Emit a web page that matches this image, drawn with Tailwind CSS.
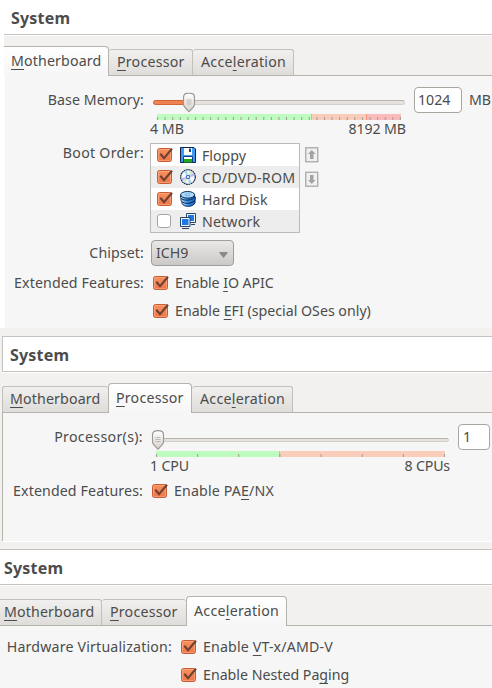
<!DOCTYPE html>
<html lang="en">
<head>
<meta charset="utf-8">
<title>System</title>
<script src="https://cdn.jsdelivr.net/npm/@tailwindcss/browser@4"></script>
</head>
<body class="w-[492px] h-[688px] overflow-hidden bg-[#f2f1f0] text-[#4c4c4c] text-[14.2px] leading-5 whitespace-nowrap font-['Noto_Sans','Open_Sans',sans-serif]">
<svg class="absolute" width="0" height="0">
  <defs>
    <linearGradient id="og" x1="0" y1="0" x2="0" y2="1"><stop offset="0" stop-color="#f9915f"/><stop offset="1" stop-color="#ee7546"/></linearGradient>
    <linearGradient id="hg" x1="0" y1="0" x2="0" y2="1"><stop offset="0" stop-color="#ffffff"/><stop offset="1" stop-color="#d4d1cd"/></linearGradient>
    <linearGradient id="bg" x1="0" y1="0" x2="1" y2="0"><stop offset="0" stop-color="#b5e2ff"/><stop offset=".5" stop-color="#2f8be6"/><stop offset="1" stop-color="#1560c0"/></linearGradient>
    <symbol id="check" viewBox="0 0 17 16">
      <rect x=".5" y="1.5" width="14" height="13" rx="2" fill="url(#og)" stroke="#c75c35"/>
      <rect x="1.5" y="2.5" width="12" height="11" rx="1" fill="none" stroke="#ffb08a" stroke-opacity=".6"/>
      <path d="M3.3 6.8 7 11.2 15 1.8" fill="none" stroke="#6d4133" stroke-width="2.1"/>
    </symbol>
    <symbol id="handle" viewBox="0 0 13 20">
      <path d="M1 4.5C1 2 2.5.7 6.5.7S12 2 12 4.5V12c0 2-3.5 5-5.5 7.2C4.5 17 1 14 1 12Z" fill="url(#hg)" stroke="#9b9791" stroke-width="1.2"/>
      <path d="M4 7.5h5M4 9.500h5M4 11.500h5" stroke="#bdb9b4"/>
    </symbol>
    <symbol id="arrow" viewBox="0 0 14 16">
      <rect x=".75" y=".75" width="12" height="14" fill="#f0f0f0" stroke="#a9a9a9" stroke-width="1.3"/>
      <path d="M6.75 3 10.5 7H8.500v5h-3.500V7H3Z" fill="#a2a2a2"/>
    </symbol>
  </defs>
</svg>

<section class="h-[328px] bg-white pl-[4px]">
  <header class="h-[35px] border-b border-[#c5c2bf] pl-[7px] pt-[8px] font-bold text-[16px] tracking-[0.2px]">System</header>
  <div class="h-[41px] bg-[#f2f1f0] border-t border-white flex items-end relative">
    <div class="absolute left-0 right-0 bottom-0 h-px bg-[#b6b2ac]"></div>
    <div class="relative w-[105px] h-[30px] bg-linear-to-b from-white to-[#f6f6f6] border-t border-r border-[#b6b2ac] rounded-tr-[4px] pl-[7px] pt-[4px] tracking-[0.15px]"><span class="underline decoration-1 underline-offset-3">M</span>otherboard</div>
    <div class="w-[84px] h-[27px] bg-linear-to-b from-[#f1f0ee] to-[#dfddda] border-y border-r border-[#c3c0bb] border-b-[#b6b2ac] rounded-t-[3px] pl-[8px] pt-[2px] tracking-[0.22px]"><span class="underline decoration-1 underline-offset-3">P</span>rocessor</div>
    <div class="w-[101px] h-[27px] bg-linear-to-b from-[#f1f0ee] to-[#dfddda] border-y border-r border-[#c3c0bb] border-b-[#b6b2ac] rounded-t-[3px] pl-[8px] pt-[2px] tracking-[0.26px]">Acce<span class="underline decoration-1 underline-offset-3">l</span>eration</div>
  </div>
  <div class="ml-px h-[252px] bg-[#f6f6f6] pt-[11px]">
    <div class="flex h-[54px]">
      <div class="w-[139px] text-right pt-[3px] tracking-[0.08px]">Base Memory:</div>
      <div class="w-[262px] pl-[6px]">
        <svg class="block" width="256" height="34">
          <rect x="3.500" y="13.500" width="251" height="4" rx="2" fill="#e5e2df" stroke="#d2cfca"/>
          <path d="M4 13.500h250" stroke="#b9b5af"/>
          <rect x="3.500" y="13.500" width="38" height="4" rx="2" fill="#f08253" stroke="#cf6539"/>
          <use href="#handle" x="32.500" y="5.500" width="13" height="20"/>
          <path d="M7 27h155v6H7Z" fill="#befbbe"/><path d="M162 27h55v6h-55Z" fill="#f9cdb9"/><path d="M217 27h34v6h-34Z" fill="#f9bbb9"/>
          <path d="M161.500 27v6" stroke="#b5cc8f"/><path d="M216.500 27v6" stroke="#fb9484"/>
          <path d="M7 31.500H251" stroke="#a09c98" stroke-width="3" stroke-dasharray="1 6.590"/>
        </svg>
        <div class="flex justify-between -mt-[2px]"><span>4 MB</span><span class="tracking-[-0.1px]">8192 MB</span></div>
      </div>
      <div class="ml-[8px] w-[48px] h-[26px] bg-white border-[1.500px] border-[#aaa59e] rounded-[4px] pl-[3px] pt-[2px]">1024</div>
      <div class="ml-[7px] pt-[3px]">MB</div>
    </div>
    <div class="flex h-[95px] pt-[2px]">
      <div class="w-[139px] text-right tracking-[0.27px]">Boot Order:</div>
      <div class="ml-[6px] w-[150px] h-[90px] bg-white border border-[#bdbab7]">
        <div class="flex items-center h-[22px] pl-[6px]"><svg width="17" height="16"><use href="#check"/></svg>
          <svg class="ml-[6px]" width="16" height="16"><path d="M.5.500H14l1.500 1.500v13.500H.5Z" fill="#3f9cf0" stroke="#10234e"/><path d="M4 1h8v7H4Z" fill="#fff"/><path d="M9 1.500h2V5H9Z" fill="#18458e"/><path d="M3.500 9.500h9V15h-9Z" fill="#fff" stroke="#134187"/><path d="M4 12h8v3.500H4Z" fill="#25a51d"/></svg>
          <span class="ml-[6px] pt-px">Floppy</span></div>
        <div class="flex items-center h-[22px] pl-[6px] bg-[#ededed]"><svg width="17" height="16"><use href="#check"/></svg>
          <svg class="ml-[6px]" width="16" height="16"><circle cx="8" cy="8" r="7.300" fill="#f4f7ff" stroke="#17294b" stroke-width="1.200" stroke-dasharray="1.800 .5"/><path d="M8 8 4 2.500l3-1.200ZM8 8l4 5.500-3 1.200Z" fill="#9fd7ef"/><path d="M8 8l5.500-4 1.200 3ZM8 8l-5.500 4-1.200-3Z" fill="#b9b5f2"/><path d="m8 8 2-6 3 2ZM8 8l-2 6-3-2Z" fill="#cdebbb"/><circle cx="8" cy="8" r="2.200" fill="#3a6fc4"/><circle cx="8" cy="8" r="1.100" fill="#fff"/></svg>
          <span class="ml-[6px] pt-px tracking-[0.23px]">CD/DVD-ROM</span></div>
        <div class="flex items-center h-[22px] pl-[6px]"><svg width="17" height="16"><use href="#check"/></svg>
          <svg class="ml-[6px]" width="16" height="16"><g stroke="#10294f" stroke-width="1"><path d="M2 9.500v3c2 4 11 3.800 13-.5V9Z" fill="url(#bg)"/><path d="M1 6.500v3c2 4 11.500 3.800 14.300-.8V6Z" fill="url(#bg)"/><path d="M.6 4v2.500C2 10.300 12 10 14.600 6V3.500Z" fill="url(#bg)"/><ellipse cx="7.600" cy="3.800" rx="7" ry="3.300" fill="#a9dcff"/></g><ellipse cx="7.600" cy="3.800" rx="2.200" ry=".9" fill="#fff" stroke="#2870bc" stroke-width=".6"/></svg>
          <span class="ml-[6px] pt-px tracking-[0.08px]">Hard Disk</span></div>
        <div class="flex items-center h-[22px] pl-[6px] bg-[#ededed]"><svg width="17" height="16"><rect x=".5" y="1.500" width="13" height="13" rx="2.500" fill="#fff" stroke="#aaa59e"/></svg>
          <svg class="ml-[6px]" width="16" height="16"><g stroke="#2c4166"><path d="M6.500.500h9v9h-9Z" fill="#f4f7fb"/><path d="M8 2h6v6H8Z" fill="#1c78e4" stroke="none"/><path d="M11 11.500h4"/><path d="M.5 4.500h9.500v9H.5Z" fill="#f4f7fb"/><path d="M2 6h6.500v6H2Z" fill="#1c78e4" stroke="none"/><path d="M2 15.500h7"/></g></svg>
          <span class="ml-[6px] pt-px tracking-[0.15px]">Network</span></div>
      </div>
      <div class="ml-[5px] pt-[4px] flex flex-col gap-[8px]">
        <svg width="14" height="16"><use href="#arrow"/></svg>
        <svg class="-scale-y-100" width="14" height="16"><use href="#arrow"/></svg>
      </div>
    </div>
    <div class="flex h-[33px] pt-[4px]">
      <div class="w-[139px] text-right pt-[3px] tracking-[0.1px]">Chipset:</div>
      <div class="ml-[7px] w-[83px] h-[26px] bg-linear-to-b from-[#e9e8e7] to-[#cbc9c7] border border-[#a19d98] rounded-[4px] flex items-center justify-between pl-[4px] pr-[5px]"><span>ICH9</span><svg class="mt-[4px]" width="9" height="6"><path d="M.5.500h8L4.500 5.500Z" fill="#8b8784" stroke="#77736f" stroke-width=".6"/></svg></div>
    </div>
    <div class="flex h-[28px] items-center">
      <div class="w-[139px] text-right tracking-[0.12px]">Extended Features:</div>
      <svg class="ml-[9px]" width="17" height="16"><use href="#check"/></svg>
      <div class="ml-[5px] tracking-[-0.08px]">Enable <span class="underline decoration-1 underline-offset-3">I</span>O APIC</div>
    </div>
    <div class="flex h-[28px] items-center pl-[148px]">
      <svg width="17" height="16"><use href="#check"/></svg>
      <div class="ml-[5px]">Enable <span class="underline decoration-1 underline-offset-3">E</span>FI (special OSes only)</div>
    </div>
  </div>
</section>

<section class="mt-[8px] ml-[2px] h-[206px] border-b border-white">
  <header class="h-[36px] bg-white border-t border-l border-b border-[#c5c2bf] pl-[7px] pt-[8px] font-bold text-[16px] tracking-[0.2px]">System</header>
  <div class="h-[41px] border-t border-white flex items-end relative">
    <div class="absolute left-0 right-0 bottom-0 h-px bg-[#b6b2ac]"></div>
    <div class="w-[106px] h-[27px] bg-linear-to-b from-[#f1f0ee] to-[#dfddda] border-y border-l border-[#c3c0bb] border-b-[#b6b2ac] rounded-t-[3px] pl-[7px] pt-[2px] tracking-[0.15px]"><span class="underline decoration-1 underline-offset-3">M</span>otherboard</div>
    <div class="relative w-[84px] h-[30px] bg-linear-to-b from-white to-[#f6f6f6] border-t border-x border-[#b6b2ac] rounded-t-[4px] pl-[7px] pt-[4px] tracking-[0.22px]"><span class="underline decoration-1 underline-offset-3">P</span>rocessor</div>
    <div class="w-[101px] h-[27px] bg-linear-to-b from-[#f1f0ee] to-[#dfddda] border-y border-r border-[#c3c0bb] border-b-[#b6b2ac] rounded-t-[3px] pl-[8px] pt-[2px] tracking-[0.26px]">Acce<span class="underline decoration-1 underline-offset-3">l</span>eration</div>
  </div>
  <div class="h-[128px] border-l border-[#b6b2ac] bg-[#f6f6f6] pt-[11px]">
    <div class="flex h-[53px]">
      <div class="w-[140px] text-right pt-[3px] tracking-[0.32px]">Processor(s):</div>
      <div class="ml-[7px] w-[300px]">
        <svg class="block" width="300" height="34">
          <rect x="7.500" y="14.500" width="291" height="3" rx="1.500" fill="#e5e2df" stroke="#d2cfca"/><path d="M8 14.500h290" stroke="#b9b5af"/>
          <use href="#handle" x="1.500" y="6" width="13" height="20"/>
          <path d="M6 27h123v6H6Z" fill="#befbbe"/><path d="M129 27h166v6H129Z" fill="#f9cdb9"/><path d="M129.500 27v6" stroke="#b5cc8f"/>
          <path d="M6 31.500H295" stroke="#a09c98" stroke-width="3" stroke-dasharray="1 40.140"/>
        </svg>
        <div class="flex justify-between -mt-[2px]"><span class="tracking-[-0.150px]">1 CPU</span><span class="tracking-[-0.150px]">8 CPUs</span></div>
      </div>
      <div class="ml-[8px] w-[32px] h-[26px] bg-white border-[1.500px] border-[#aaa59e] rounded-[4px] pl-[4px] pt-[2px]">1</div>
    </div>
    <div class="flex h-[28px] items-center">
      <div class="w-[140px] text-right tracking-[0.12px]">Extended Features:</div>
      <svg class="ml-[9px]" width="17" height="16"><use href="#check"/></svg>
      <div class="ml-[5px] tracking-[0.15px]">Enable PA<span class="underline decoration-1 underline-offset-3">E</span>/NX</div>
    </div>
  </div>
</section>

<section class="mt-[7px] h-[139px]">
  <header class="h-[36px] bg-white border-y border-[#c5c2bf] pl-[4px] pt-[8px] font-bold text-[16px] tracking-[0.2px]">System</header>
  <div class="h-[41px] border-t border-white flex items-end relative">
    <div class="absolute left-0 right-0 bottom-0 h-px bg-[#b6b2ac]"></div>
    <div class="w-[102px] h-[27px] bg-linear-to-b from-[#f1f0ee] to-[#dfddda] border-y border-r border-[#c3c0bb] border-b-[#b6b2ac] rounded-tr-[3px] pl-[4px] pt-[2px] tracking-[0.15px]"><span class="underline decoration-1 underline-offset-3">M</span>otherboard</div>
    <div class="w-[84px] h-[27px] bg-linear-to-b from-[#f1f0ee] to-[#dfddda] border-y border-[#c3c0bb] border-b-[#b6b2ac] rounded-t-[3px] pl-[8px] pt-[2px] tracking-[0.22px]"><span class="underline decoration-1 underline-offset-3">P</span>rocessor</div>
    <div class="relative w-[101px] h-[30px] bg-linear-to-b from-white to-[#f6f6f6] border-t border-x border-[#b6b2ac] rounded-t-[4px] pl-[7px] pt-[4px] tracking-[0.26px]">Acce<span class="underline decoration-1 underline-offset-3">l</span>eration</div>
  </div>
  <div class="h-[62px] bg-[#f6f6f6] pt-[7px]">
    <div class="flex h-[28px] items-center">
      <div class="w-[172px] text-right tracking-[0.18px]">Hardware Virtualization:</div>
      <svg class="ml-[9px]" width="17" height="16"><use href="#check"/></svg>
      <div class="ml-[5px] tracking-[0.15px]">Enable <span class="underline decoration-1 underline-offset-3">V</span>T-x/AMD-V</div>
    </div>
    <div class="flex h-[28px] items-center pl-[181px]">
      <svg width="17" height="16"><use href="#check"/></svg>
      <div class="ml-[5px]">Enable Nested Pa<span class="underline decoration-1 underline-offset-3">g</span>ing</div>
    </div>
  </div>
</section>
</body>
</html>
